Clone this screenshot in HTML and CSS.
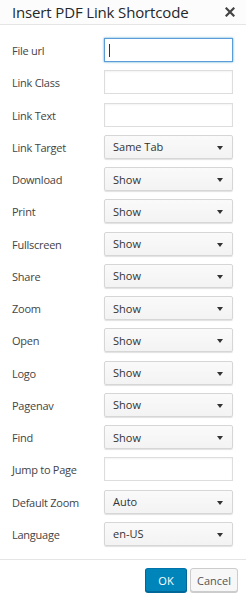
FILE: index.html
```html
<!DOCTYPE html>
<html lang="en">
<head>
  <meta charset="UTF-8" />
  <title>Insert PDF Link Shortcode</title>
  <link rel="stylesheet" href="styles.css">
</head>
<body>

<div class="dialog">
  <div class="dialog-head">
    <span class="dialog-title">Insert PDF Link Shortcode</span>
    <svg class="dialog-close" width="10" height="10" viewBox="0 0 10 10">
      <path d="M1.5 1.5 L8.5 8.5 M8.5 1.5 L1.5 8.5" stroke="#444" stroke-width="2.2" stroke-linecap="square" />
    </svg>
  </div>

  <div class="dialog-body">
    <label class="field-label">File url</label>
    <div class="field text focused"><span class="caret"></span></div>

    <label class="field-label">Link Class</label>
    <div class="field text"></div>

    <label class="field-label">Link Text</label>
    <div class="field text"></div>

    <label class="field-label">Link Target</label>
    <div class="field select">Same Tab</div>

    <label class="field-label">Download</label>
    <div class="field select">Show</div>

    <label class="field-label">Print</label>
    <div class="field select">Show</div>

    <label class="field-label">Fullscreen</label>
    <div class="field select">Show</div>

    <label class="field-label">Share</label>
    <div class="field select">Show</div>

    <label class="field-label">Zoom</label>
    <div class="field select">Show</div>

    <label class="field-label">Open</label>
    <div class="field select">Show</div>

    <label class="field-label">Logo</label>
    <div class="field select">Show</div>

    <label class="field-label">Pagenav</label>
    <div class="field select">Show</div>

    <label class="field-label">Find</label>
    <div class="field select">Show</div>

    <label class="field-label">Jump to Page</label>
    <div class="field text"></div>

    <label class="field-label">Default Zoom</label>
    <div class="field select">Auto</div>

    <label class="field-label">Language</label>
    <div class="field select">en-US</div>
  </div>

  <div class="dialog-foot">
    <button class="btn btn-primary">OK</button>
    <button class="btn">Cancel</button>
  </div>
</div>

</body>
</html>
```

FILE: styles.css
```css
body {
  margin: 0;
  background: #fff;
  font-family: 'Open Sans', sans-serif;
  color: #32373c;
}
.dialog {
  width: 246px;
  height: 600px;
  background: #fff;
}
.dialog-head {
  height: 24px;
  background: #fcfcfc;
  border-bottom: 1px solid #e5e5e5;
  display: flex;
  align-items: center;
  justify-content: space-between;
  padding: 0 11px 0 12px;
}
.dialog-title {
  font-size: 15px;
  color: #23282d;
  letter-spacing: -0.15px;
}
.dialog-close {
  display: block;
}
.dialog-body {
  display: grid;
  grid-template-columns: 92px 129px;
  grid-auto-rows: 24px;
  row-gap: 8.27px;
  align-items: center;
  padding: 13px 13px 0 12px;
  height: 534px;
  box-sizing: border-box;
}
.field-label {
  font-size: 11px;
  letter-spacing: -0.25px;
  color: #444;
  padding-top: 1px;
}
.field {
  height: 24px;
  box-sizing: border-box;
  border: 1px solid #ddd;
  font-size: 11px;
  color: #333;
  display: flex;
  align-items: center;
  padding: 0 8px;
}
.field.text {
  background: #fff;
  box-shadow: inset 0 1px 2px rgba(0,0,0,0.05);
}
.field.focused {
  border-color: #5b9dd9;
  box-shadow: 0 0 2px rgba(30,140,190,0.8);
}
.caret {
  width: 1px;
  height: 13px;
  background: #333;
  margin-left: -4px;
}
.field.select {
  background: linear-gradient(#fafafa, #f3f3f3);
  border-color: #d6d6d6;
  border-radius: 2px;
  box-shadow: 0 1px 1px rgba(0,0,0,0.12);
  position: relative;
}
.field.select::after {
  content: "";
  position: absolute;
  right: 9px;
  top: 10px;
  border-left: 3px solid transparent;
  border-right: 3px solid transparent;
  border-top: 4px solid #333;
}
.dialog-foot {
  border-top: 1px solid #e5e5e5;
  display: flex;
  justify-content: flex-end;
  gap: 3px;
  padding: 8px 8px 0 0;
}
.btn {
  height: 24px;
  box-sizing: border-box;
  font-family: 'Open Sans', sans-serif;
  font-size: 11px;
  padding: 0 6px;
  border: 1px solid #ccc;
  border-radius: 3px;
  background: #f7f7f7;
  color: #555;
  box-shadow: 0 1px 0 #ccc;
}
.btn-primary {
  width: 42px;
  background: #0085ba;
  border-color: #0073aa #006799 #006799;
  color: #fff;
  box-shadow: 0 1px 0 #006799;
}
```
